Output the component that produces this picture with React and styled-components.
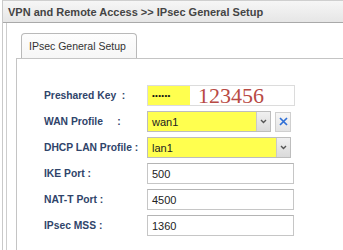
import React from "react"
import styled, { createGlobalStyle } from "styled-components"

const GlobalStyle = createGlobalStyle`
  html, body {
    margin: 0;
    padding: 0;
    background: #ffffff;
    font-family: "Liberation Sans", Arial, sans-serif;
  }
`

const Frame = styled.div`
  margin-left: 2px;
  height: 250px;
  border-left: 1px solid #c9c9c9;
  box-sizing: border-box;
  overflow: hidden;
`

const Header = styled.div`
  height: 21px;
  border-top: 1px solid #cfcfcf;
  border-bottom: 1px solid #a9a9a9;
  background: linear-gradient(#f6f6f6, #e6e6e6);
  display: flex;
  align-items: center;
  padding-left: 5px;
  font-size: 11px;
  font-weight: bold;
  color: #444444;
`

const Body = styled.div`
  margin-left: 3px;
  border-left: 1px solid #cdcdcd;
  height: 100%;
  padding: 10px 0 0 9px;
`

const TabBar = styled.div`
  display: flex;
  padding-left: 5px;
  height: 25px;
`

const Tab = styled.div`
  width: 116px;
  height: 25px;
  box-sizing: border-box;
  border: 1px solid #b9b9b9;
  border-bottom: none;
  border-radius: 4px 4px 0 0;
  background: linear-gradient(#fdfdfd, #f6f6f6);
  display: flex;
  align-items: center;
  padding-left: 7px;
  font-size: 10.5px;
  color: #333333;
  position: relative;
  z-index: 1;
  margin-bottom: -1px;
`

const Panel = styled.div`
  border-top: 1px solid #c4c4c4;
  border-left: 1px solid #c4c4c4;
  height: 200px;
  padding: 26px 0 0 27px;
`

const Form = styled.div`
  display: grid;
  grid-template-columns: 103px auto;
  grid-auto-rows: 21px;
  row-gap: 5px;
  align-items: center;
`

const Label = styled.div`
  font-size: 10.3px;
  font-weight: bold;
  color: #30446a;
  white-space: pre;
`

const FieldRow = styled.div`
  display: flex;
  align-items: center;
  height: 21px;
`

const TextBox = styled.div`
  width: 147px;
  height: 21px;
  box-sizing: border-box;
  border: 1px solid #c6c6c6;
  border-top-color: #b4b4b4;
  background: #ffffff;
  display: flex;
  align-items: center;
  padding-left: 4px;
  font-size: 11px;
  color: #222222;
`

const KeyBox = styled.div`
  width: 148px;
  height: 21px;
  box-sizing: border-box;
  border: 1px solid #dcdcdc;
  display: flex;
  align-items: center;
`

const KeyFill = styled.div`
  width: 42px;
  height: 100%;
  background: #ffff4f;
  display: flex;
  align-items: center;
  padding-left: 4px;
  box-sizing: border-box;
  font-size: 8px;
  letter-spacing: 0.3px;
  color: #111111;
`

const KeyNote = styled.span`
  font-family: "Liberation Serif", "Times New Roman", serif;
  font-size: 22px;
  color: #b84a44;
  margin-left: 8px;
  line-height: 19px;
`

const Select = styled.div`
  width: ${p => p.$width}px;
  height: 21px;
  box-sizing: border-box;
  border: 1px solid #bdbdbd;
  background: #ffff4f;
  display: flex;
  align-items: stretch;
  font-size: 11px;
  color: #222222;
`

const SelectValue = styled.div`
  flex: 1;
  display: flex;
  align-items: center;
  padding-left: 4px;
`

const Arrow = styled.div`
  width: 13px;
  border-left: 1px solid #c9c9c9;
  background: linear-gradient(#f0f0f0, #dadada);
  display: flex;
  align-items: center;
  justify-content: center;
`

const ClearButton = styled.div`
  width: 16px;
  height: 20px;
  margin-left: 4px;
  box-sizing: border-box;
  border: 1px solid #cfcfcf;
  background: linear-gradient(#f7f7f7, #e4e4e4);
  display: flex;
  align-items: center;
  justify-content: center;
`

const Chevron = () => (
  <svg width="7" height="5" viewBox="0 0 7 5">
    <path d="M1 1 L3.5 3.5 L6 1" fill="none" stroke="#555" strokeWidth="1.4" />
  </svg>
)

const Cross = () => (
  <svg width="9" height="9" viewBox="0 0 9 9">
    <path d="M1 1 L8 8 M8 1 L1 8" fill="none" stroke="#2f6fd6" strokeWidth="1.7" />
  </svg>
)

const ports = [
  { label: "IKE Port :", value: "500" },
  { label: "NAT-T Port :", value: "4500" },
  { label: "IPsec MSS :", value: "1360" },
]

const App = () => (
  <>
    <GlobalStyle />
    <Frame>
      <Header>VPN and Remote Access &gt;&gt; IPsec General Setup</Header>
      <Body>
        <TabBar>
          <Tab>IPsec General Setup</Tab>
        </TabBar>
        <Panel>
          <Form>
            <Label>{"Preshared Key  :"}</Label>
            <FieldRow>
              <KeyBox>
                <KeyFill>••••••</KeyFill>
                <KeyNote>123456</KeyNote>
              </KeyBox>
            </FieldRow>

            <Label>{"WAN Profile     :"}</Label>
            <FieldRow>
              <Select $width={124}>
                <SelectValue>wan1</SelectValue>
                <Arrow><Chevron /></Arrow>
              </Select>
              <ClearButton><Cross /></ClearButton>
            </FieldRow>

            <Label>DHCP LAN Profile :</Label>
            <FieldRow>
              <Select $width={144}>
                <SelectValue>lan1</SelectValue>
                <Arrow><Chevron /></Arrow>
              </Select>
            </FieldRow>

            {ports.map(port => (
              <React.Fragment key={port.label}>
                <Label>{port.label}</Label>
                <FieldRow>
                  <TextBox>{port.value}</TextBox>
                </FieldRow>
              </React.Fragment>
            ))}
          </Form>
        </Panel>
      </Body>
    </Frame>
  </>
)

export default App
